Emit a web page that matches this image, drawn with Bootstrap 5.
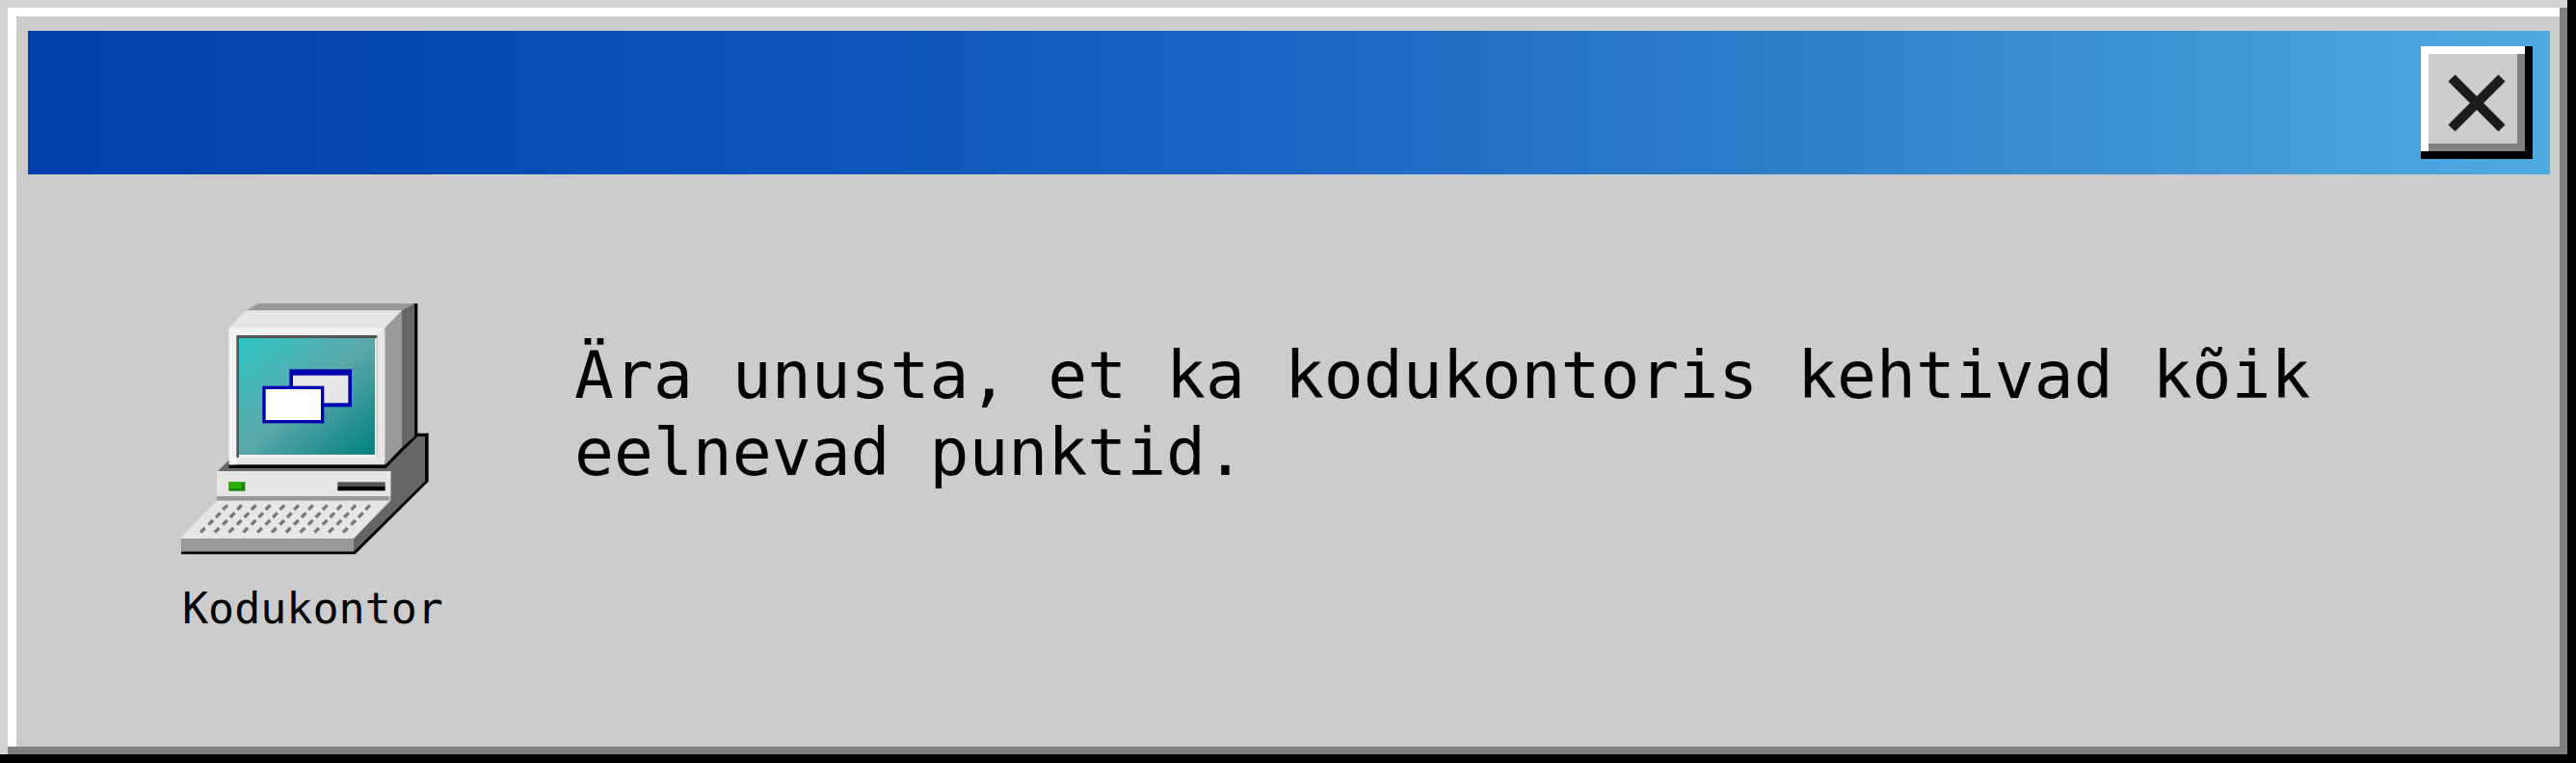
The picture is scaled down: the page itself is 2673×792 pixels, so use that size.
<!DOCTYPE html>
<html lang="et">
<head>
<meta charset="UTF-8">
<title>Kodukontor</title>
<link href="https://cdn.jsdelivr.net/npm/bootstrap@5.3.3/dist/css/bootstrap.min.css" rel="stylesheet">
<style>
  html, body { height: 100%; }
  body { background: #ccc; overflow: hidden; }
  .win-box { height: 792px; background: #ccc; padding: 32px 27px 0 29px;
    box-shadow: inset -9px -9px 0 #000, inset 8px 8px 0 #d4d4d4, inset -17px -17px 0 #808080, inset 17px 17px 0 #fff; }
  .win-title { height: 149px; padding-right: 18px; background: linear-gradient(90deg, #003eae 0%, #0f55b9 33%, #1b67c3 50%, #2c7dc8 68%, #4dabe0 100%); }
  .close-btn { width: 116px; height: 117px; padding: 0; border: 0; border-radius: 0; background: #ccc;
    box-shadow: inset -8px -8px 0 #000, inset 8px 8px 0 #fff, inset -16px -16px 0 #808080; }
  .close-btn:hover, .close-btn:active { background: #ccc !important; }
  .win-body { padding: 134px 0 0 159px; font-family: "DejaVu Sans Mono", monospace; color: #000; }
  .icon-col { width: 272px; }
  .icon-label { font-size: 45px; line-height: 1; margin-top: 33px; margin-left: 1px; white-space: nowrap; }
  .msg { margin: 35px 0 0 136px; width: 1900px; font-size: 68px; line-height: 80px; }
</style>
</head>
<body>
<div class="win-box">
  <div class="win-title d-flex justify-content-end align-items-center">
    <button type="button" class="btn close-btn d-flex align-items-center justify-content-center" aria-label="Sulge">
      <svg width="64" height="64" viewBox="0 0 64 64"><path d="M6 6 58 58M58 6 6 58" stroke="#1c1c1c" stroke-width="10" fill="none"/></svg>
    </button>
  </div>
  <div class="win-body d-flex align-items-start">
    <div class="icon-col d-flex flex-column align-items-start">
      <svg width="272" height="261" viewBox="113 76 816 783">
        <defs>
          <linearGradient id="scr" x1="0" y1="0" x2="1" y2="1">
            <stop offset="0" stop-color="#30c6c6"/>
            <stop offset=".5" stop-color="#5ca8a8"/>
            <stop offset="1" stop-color="#008080"/>
          </linearGradient>
        </defs>
        <!-- base -->
        <path d="M228 598 262 565H750L849 480H883V630L655 857H113V848H650L872 628V490H850L765 598Z" fill="#000"/>
        <path d="M228 598 262 566V588H750L849 490H872V628L650 848V808L765 690V598Z" fill="#666"/>
        <!-- monitor -->
        <path d="M315 98 352 76H838L800 98Z" fill="#999"/>
        <path d="M838 76H849V490H838Z" fill="#000"/>
        <path d="M800 98 838 76V490L800 525Z" fill="#666"/>
        <path d="M747 152 800 98V525L747 580Z" fill="#999"/>
        <path d="M262 152 315 98H800L747 152Z" fill="#e6e6e6"/>
        <path d="M262 578H750L800 525V536L750 588H262Z" fill="#000"/>
        <rect x="262" y="152" width="485" height="426" fill="#e6e6e6"/>
        <path d="M262 152H747L720 175H285V578H262Z" fill="#f2f2f2"/>
        <rect x="285" y="175" width="438" height="381" fill="#555"/>
        <rect x="293" y="546" width="430" height="10" fill="#f2f2f2"/>
        <rect x="715" y="184" width="8" height="372" fill="#e6e6e6"/>
        <rect x="293" y="184" width="422" height="362" fill="url(#scr)"/>
        <!-- small windows on the screen -->
        <rect x="450" y="281" width="194" height="117" fill="#0000b0"/>
        <rect x="461" y="300" width="172" height="86" fill="#e6e6e6"/>
        <rect x="366" y="333" width="192" height="116" fill="#0000b0"/>
        <rect x="376" y="343" width="172" height="96" fill="#fff"/>
        <!-- front of base -->
        <rect x="224" y="598" width="541" height="78" fill="#e6e6e6"/>
        <rect x="224" y="676" width="536" height="14" fill="#999"/>
        <rect x="261" y="632" width="51" height="28" fill="#118800"/>
        <rect x="261" y="632" width="40" height="20" fill="#2ab000"/>
        <rect x="600" y="632" width="148" height="13" fill="#555"/>
        <rect x="600" y="645" width="148" height="14" fill="#000"/>
        <!-- keyboard -->
        <path d="M113 803 224 690H760L650 808H113Z" fill="#e6e6e6"/>
        <rect x="113" y="808" width="537" height="40" fill="#999"/>
        <path id="keys" d="" stroke="#777" stroke-width="10" fill="none"/>
      </svg>
      <div class="icon-label">Kodukontor</div>
    </div>
    <p class="msg mb-0">Ära unusta, et ka kodukontoris kehtivad kõik eelnevad punktid.</p>
  </div>
</div>
<script>
  // klaviatuuri klahvid
  const rows = [[250, 711], [228, 735], [205, 758], [180, 782]];
  let d = '';
  rows.forEach(([x0, y]) => {
    for (let i = 0; i < 11; i++) {
      const x = x0 + i * 44.4;
      d += `M${x - 7} ${y + 7}L${x + 7} ${y - 7}`;
    }
  });
  document.getElementById('keys').setAttribute('d', d);
</script>
<script src="https://cdn.jsdelivr.net/npm/bootstrap@5.3.3/dist/js/bootstrap.bundle.min.js"></script>
</body>
</html>
